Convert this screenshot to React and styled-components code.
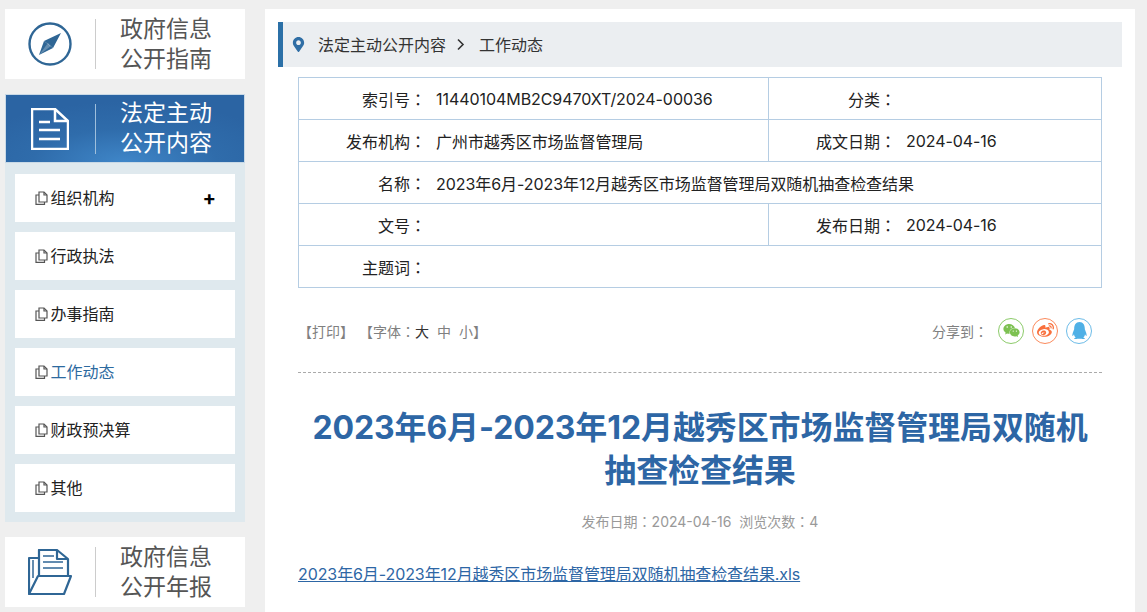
import React from "react"
import styled, { createGlobalStyle } from "styled-components"
import { FaWeixin, FaWeibo, FaQq, FaMapMarkerAlt } from "react-icons/fa"

const GlobalStyle = createGlobalStyle`
html, body {
    margin: 0;
    padding: 0;
    height: 612px;
    overflow: hidden;
    background: #efefef;
    font-family: Inter, "Noto Sans CJK SC", sans-serif;
}
`;

const Page = styled.div`
display: flex;
align-items: flex-start;
gap: 20px;
padding: 9px 12px 0 5px;
height: 603px;
overflow: hidden;
`;

const Side = styled.aside`
width: 240px;
flex: none;
display: flex;
flex-direction: column;
`;

const Card = styled.div`
height: ${props => props.$h || 70}px;
margin-top: ${props => props.$top || 0}px;
box-sizing: border-box;
display: flex;
align-items: center;
background: ${props => props.$active ? "radial-gradient(ellipse 70% 90% at 50% 100%, #3f86c8 0%, #2f6cab 55%, #2b64a3 100%)" : "#fff"};
color: ${props => props.$active ? "#fff" : "#555"};
border: ${props => props.$active ? "1px solid #c9d9e6" : "none"};
`;

const IconWrap = styled.div`
width: ${props => props.$active ? 89 : 90}px;
padding-right: ${props => props.$active ? 2 : 0}px;
box-sizing: border-box;
flex: none;
display: flex;
justify-content: center;
`;

const Divider = styled.div`
width: 1px;
height: 50px;
background: ${props => props.$active ? "#9fbfdc" : "#ccc"};
flex: none;
`;

const CardText = styled.div`
margin-left: 24px;
padding-bottom: ${props => props.$active ? 2 : 0}px;
font-size: 23px;
line-height: 30px;
`;

const Panel = styled.div`
background: #dfe9ee;
padding: 11px 10px 10px;
display: flex;
flex-direction: column;
gap: 10px;
`;

const Item = styled.div`
height: 48px;
background: #fff;
display: flex;
align-items: center;
padding: 0 20px;
font-size: 16px;
color: ${props => props.$current ? "#2d6a9f" : "#222"};
`;

const ItemName = styled.span`
flex: 1;
margin-left: 2.5px;
padding-bottom: 2px;
`;

const Plus = styled.span`
font-size: 20px;
font-weight: 700;
color: #000;
line-height: 1;
margin-right: -1px;
`;

const Main = styled.main`
width: 870px;
flex: none;
height: 603px;
background: #fff;
box-sizing: border-box;
padding: 13px 13px 0;
`;

const Crumb = styled.div`
height: 45px;
background: #ebeef1;
border-left: 5px solid #2b70a7;
display: flex;
align-items: center;
padding-left: 8px;
font-size: 16px;
color: #333;
`;

const CrumbPin = styled(FaMapMarkerAlt)`
color: #2f6ea5;
font-size: 15px;
margin-right: 12px;
`;

const CrumbText = styled.span`
padding-bottom: 2px;
`;

const CrumbSep = styled.span`
margin: 0 14px 0 10px;
display: flex;
`;

const Body = styled.div`
padding: 10px 20px 0;
`;

const Table = styled.div`
border: 1px solid #b5cde3;
border-bottom: none;
font-size: 16px;
color: #222;
`;

const Row = styled.div`
display: flex;
height: 42px;
box-sizing: border-box;
border-bottom: 1px solid #b5cde3;
`;

const Cell = styled.div`
display: flex;
align-items: center;
width: ${props => props.$wide ? "auto" : "470px"};
flex: ${props => props.$wide ? 1 : "none"};
border-right: ${props => props.$split ? "1px solid #b5cde3" : "none"};
box-sizing: border-box;
`;

const Label = styled.span`
width: 127px;
text-align: right;
flex: none;
`;

const Colon = styled.span`
font-family: "Noto Sans CJK TC", sans-serif;
`;

const Value = styled.span`
margin-left: 10px;
white-space: nowrap;
letter-spacing: -0.06px;
`;

const Tools = styled.div`
height: 85px;
box-sizing: border-box;
display: flex;
align-items: center;
justify-content: space-between;
border-bottom: 1px dashed #aaa;
font-size: 14px;
color: #808080;
padding: 1px 10px 0 0;
margin-bottom: 33px;
`;

const ToolsLeft = styled.div`
display: flex;
`;

const Group = styled.span`
margin-left: ${props => props.$gap || 0}px;
`;

const Size = styled.span`
margin-right: ${props => props.$last ? 0 : 8}px;
color: ${props => props.$on ? "#333" : "#808080"};
`;

const Share = styled.div`
display: flex;
align-items: center;
gap: 8px;
`;

const ShareLabel = styled.span`
margin-right: 2px;
`;

const Round = styled.span`
width: 24px;
height: 24px;
border-radius: 50%;
border: 1px solid ${props => props.$c};
color: ${props => props.$fill};
display: flex;
align-items: center;
justify-content: center;
font-size: 17px;
`;

const Title = styled.h1`
margin: 0;
font-size: 32px;
line-height: 43px;
font-weight: 700;
color: #2d66a5;
text-align: center;
letter-spacing: -0.1px;
`;

const Meta = styled.div`
text-align: center;
margin-top: 19px;
font-size: 14px;
line-height: 20px;
color: #999;
`;

const FileLink = styled.a`
display: block;
margin-top: 30px;
font-size: 16px;
line-height: 24px;
color: #2d66a5;
text-decoration: underline;
letter-spacing: -0.09px;
`;

function Compass() {
    return (
        <svg width="46" height="46" viewBox="0 0 46 46">
            <circle cx="23" cy="23" r="20.5" fill="none" stroke="#2f6695" strokeWidth="2.4" />
            <path d="M34 12 L26 27 L17 20 Z" fill="#2f6695" />
            <path d="M12 34 L17 20 L26 27 Z" fill="#2f6695" />
            <path d="M12 34 L21 22 L24 25 Z" fill="#fff" opacity="0.25" />
        </svg>
    )
}

function DocIcon() {
    return (
        <svg width="38" height="42" viewBox="0 0 38 42" fill="none" stroke="#fff" strokeWidth="2.5">
            <path d="M1 1 H24 L37 13 V41 H1 Z" />
            <path d="M24 1 V13 H37" />
            <path d="M8 14 H19 M8 22 H29 M8 31 H29" />
        </svg>
    )
}

function FolderIcon() {
    return (
        <svg width="44" height="46" viewBox="0 0 44 46" fill="none" stroke="#2f6695" strokeWidth="2.2" strokeLinejoin="round">
            <path d="M11 26 V1 H29 L40 10 V26" />
            <path d="M29 1 V10 H40" />
            <path d="M15 7 H26 M15 13 H35 M15 19 H35" strokeWidth="1.5" />
            <path d="M11 9 H1 V45" />
            <path d="M5 11 V29" strokeWidth="1.5" />
            <path d="M10 27 H43 L36 45 H1 Z" />
        </svg>
    )
}

function PageIcon() {
    return (
        <svg width="13" height="14" viewBox="0 0 13 14" fill="none" stroke="#555" strokeWidth="1.2" style={{ flex: "none" }}>
            <path d="M4 1 H9 L12 4 V11 H4 Z" />
            <path d="M9 1 V4 H12" />
            <path d="M4 4 H1 V13.4 H9.5 V11" />
        </svg>
    )
}

const menu = ["组织机构", "行政执法", "办事指南", "工作动态", "财政预决算", "其他"];

export default function App() {
    return (
        <Page>
            <GlobalStyle />
            <Side>
                <Card>
                    <IconWrap><Compass /></IconWrap>
                    <Divider />
                    <CardText>政府信息<br />公开指南</CardText>
                </Card>
                <Card $active $h={69} $top={15}>
                    <IconWrap $active><DocIcon /></IconWrap>
                    <Divider $active />
                    <CardText $active>法定主动<br />公开内容</CardText>
                </Card>
                <Panel>
                    {menu.map((name, i) => (
                        <Item key={name} $current={i === 3}>
                            <PageIcon />
                            <ItemName>{name}</ItemName>
                            {i === 0 && <Plus>+</Plus>}
                        </Item>
                    ))}
                </Panel>
                <Card $top={15}>
                    <IconWrap><FolderIcon /></IconWrap>
                    <Divider />
                    <CardText>政府信息<br />公开年报</CardText>
                </Card>
            </Side>
            <Main>
                <Crumb>
                    <CrumbPin />
                    <CrumbText>法定主动公开内容</CrumbText>
                    <CrumbSep>
                        <svg width="9" height="13" viewBox="0 0 9 13" fill="none" stroke="#333" strokeWidth="1.6"><path d="M2 1.5 L7 6.5 L2 11.5" /></svg>
                    </CrumbSep>
                    <CrumbText>工作动态</CrumbText>
                </Crumb>
                <Body>
                    <Table>
                        <Row>
                            <Cell $split><Label>索引号<Colon>：</Colon></Label><Value>11440104MB2C9470XT/2024-00036</Value></Cell>
                            <Cell $wide><Label>分类<Colon>：</Colon></Label></Cell>
                        </Row>
                        <Row>
                            <Cell $split><Label>发布机构<Colon>：</Colon></Label><Value>广州市越秀区市场监督管理局</Value></Cell>
                            <Cell $wide><Label>成文日期<Colon>：</Colon></Label><Value>2024-04-16</Value></Cell>
                        </Row>
                        <Row>
                            <Cell $wide><Label>名称<Colon>：</Colon></Label><Value>2023年6月-2023年12月越秀区市场监督管理局双随机抽查检查结果</Value></Cell>
                        </Row>
                        <Row>
                            <Cell $split><Label>文号<Colon>：</Colon></Label></Cell>
                            <Cell $wide><Label>发布日期<Colon>：</Colon></Label><Value>2024-04-16</Value></Cell>
                        </Row>
                        <Row>
                            <Cell $wide><Label>主题词<Colon>：</Colon></Label></Cell>
                        </Row>
                    </Table>
                    <Tools>
                        <ToolsLeft>
                            <Group>【打印】</Group>
                            <Group $gap={5}>【字体<Colon>：</Colon><Size $on>大</Size><Size>中</Size><Size $last>小</Size>】</Group>
                        </ToolsLeft>
                        <Share>
                            <ShareLabel>分享到<Colon>：</Colon></ShareLabel>
                            <Round $c="#8ccb6a" $fill="#7dc152"><FaWeixin /></Round>
                            <Round $c="#fb8a5c" $fill="#f9703d"><FaWeibo /></Round>
                            <Round $c="#6dbce8" $fill="#4fb0e6"><FaQq /></Round>
                        </Share>
                    </Tools>
                    <Title>2023年6月-2023年12月越秀区市场监督管理局双随机<br />抽查检查结果</Title>
                    <Meta>发布日期<Colon>：</Colon>2024-04-16&nbsp;&nbsp;浏览次数<Colon>：</Colon>4</Meta>
                    <FileLink href="#">2023年6月-2023年12月越秀区市场监督管理局双随机抽查检查结果.xls</FileLink>
                </Body>
            </Main>
        </Page>
    )
}
